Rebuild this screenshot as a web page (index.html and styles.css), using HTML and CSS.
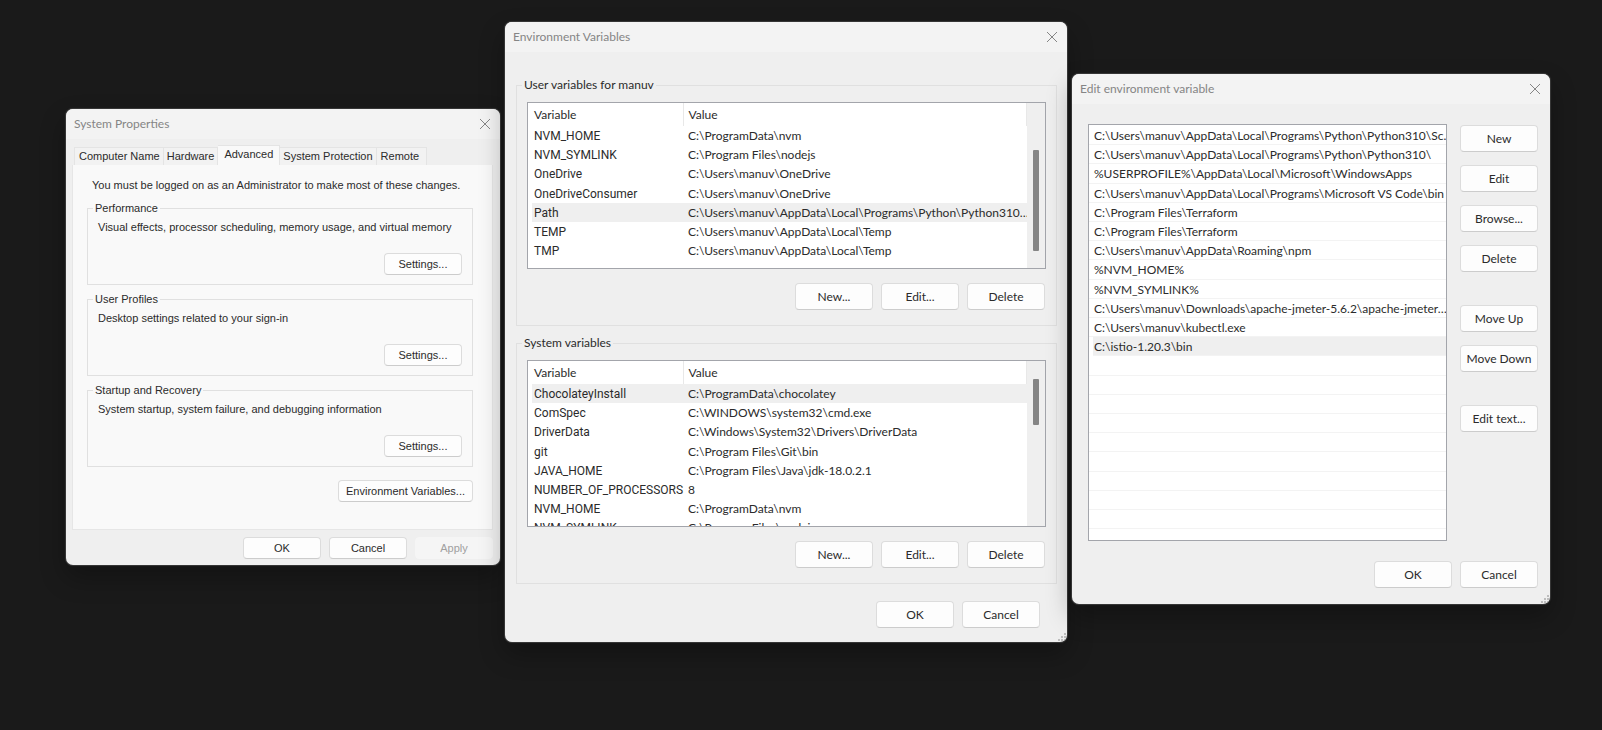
FILE: index.html
```html
<!DOCTYPE html>
<html lang="en">
<head>
<meta charset="utf-8">
<title>Environment Variables</title>
<link rel="stylesheet" href="styles.css">
</head>
<body>
<main class="desktop">

  <section class="window system-properties" aria-label="System Properties">
    <header class="titlebar">
      <h1 class="title">System Properties</h1>
      <button class="close" type="button" aria-label="Close"><svg viewBox="0 0 12 12" width="12" height="12"><path d="M1 1L11 11M11 1L1 11"/></svg></button>
    </header>
    <nav class="tabs">
      <button class="tab" type="button">Computer Name</button>
      <button class="tab" type="button">Hardware</button>
      <button class="tab active" type="button">Advanced</button>
      <button class="tab" type="button">System Protection</button>
      <button class="tab" type="button">Remote</button>
    </nav>
    <div class="panel">
      <p class="notice">You must be logged on as an Administrator to make most of these changes.</p>
      <fieldset class="group setting">
        <legend>Performance</legend>
        <p>Visual effects, processor scheduling, memory usage, and virtual memory</p>
        <button class="btn" type="button">Settings...</button>
      </fieldset>
      <fieldset class="group setting">
        <legend>User Profiles</legend>
        <p>Desktop settings related to your sign-in</p>
        <button class="btn" type="button">Settings...</button>
      </fieldset>
      <fieldset class="group setting">
        <legend>Startup and Recovery</legend>
        <p>System startup, system failure, and debugging information</p>
        <button class="btn" type="button">Settings...</button>
      </fieldset>
      <button class="btn env-btn" type="button">Environment Variables...</button>
    </div>
    <footer class="actions">
      <button class="btn" type="button">OK</button>
      <button class="btn" type="button">Cancel</button>
      <button class="btn" type="button" disabled>Apply</button>
    </footer>
  </section>

  <section class="window environment" aria-label="Environment Variables">
    <header class="titlebar">
      <h1 class="title">Environment Variables</h1>
      <button class="close" type="button" aria-label="Close"><svg viewBox="0 0 12 12" width="12" height="12"><path d="M1 1L11 11M11 1L1 11"/></svg></button>
    </header>
    <div class="groups">
      <fieldset class="group variables">
        <legend>User variables for manuv</legend>
        <div class="listview">
          <table class="table">
            <thead><tr><th scope="col">Variable</th><th scope="col">Value</th></tr></thead>
            <tbody>
              <tr><td>NVM_HOME</td><td>C:\ProgramData\nvm</td></tr>
              <tr><td>NVM_SYMLINK</td><td>C:\Program Files\nodejs</td></tr>
              <tr><td>OneDrive</td><td>C:\Users\manuv\OneDrive</td></tr>
              <tr><td>OneDriveConsumer</td><td>C:\Users\manuv\OneDrive</td></tr>
              <tr class="selected"><td>Path</td><td>C:\Users\manuv\AppData\Local\Programs\Python\Python310…</td></tr>
              <tr><td>TEMP</td><td>C:\Users\manuv\AppData\Local\Temp</td></tr>
              <tr><td>TMP</td><td>C:\Users\manuv\AppData\Local\Temp</td></tr>
            </tbody>
          </table>
          <div class="scrollbar"><div class="thumb thumb-end"></div></div>
        </div>
        <div class="actions">
          <button class="btn" type="button">New...</button>
          <button class="btn" type="button">Edit...</button>
          <button class="btn" type="button">Delete</button>
        </div>
      </fieldset>
      <fieldset class="group variables">
        <legend>System variables</legend>
        <div class="listview">
          <table class="table">
            <thead><tr><th scope="col">Variable</th><th scope="col">Value</th></tr></thead>
            <tbody>
              <tr class="selected"><td>ChocolateyInstall</td><td>C:\ProgramData\chocolatey</td></tr>
              <tr><td>ComSpec</td><td>C:\WINDOWS\system32\cmd.exe</td></tr>
              <tr><td>DriverData</td><td>C:\Windows\System32\Drivers\DriverData</td></tr>
              <tr><td>git</td><td>C:\Program Files\Git\bin</td></tr>
              <tr><td>JAVA_HOME</td><td>C:\Program Files\Java\jdk-18.0.2.1</td></tr>
              <tr><td>NUMBER_OF_PROCESSORS</td><td>8</td></tr>
              <tr><td>NVM_HOME</td><td>C:\ProgramData\nvm</td></tr>
              <tr><td>NVM_SYMLINK</td><td>C:\Program Files\nodejs</td></tr>
            </tbody>
          </table>
          <div class="scrollbar"><div class="thumb thumb-start"></div></div>
        </div>
        <div class="actions">
          <button class="btn" type="button">New...</button>
          <button class="btn" type="button">Edit...</button>
          <button class="btn" type="button">Delete</button>
        </div>
      </fieldset>
    </div>
    <footer class="actions">
      <button class="btn" type="button">OK</button>
      <button class="btn" type="button">Cancel</button>
    </footer>
    <svg class="grip" viewBox="0 0 10 10" width="10" height="10"><path d="M7 1h2v2h-2zM4 4h2v2h-2zM7 4h2v2h-2zM1 7h2v2h-2zM4 7h2v2h-2zM7 7h2v2h-2z"/></svg>
  </section>

  <section class="window edit-variable" aria-label="Edit environment variable">
    <header class="titlebar">
      <h1 class="title">Edit environment variable</h1>
      <button class="close" type="button" aria-label="Close"><svg viewBox="0 0 12 12" width="12" height="12"><path d="M1 1L11 11M11 1L1 11"/></svg></button>
    </header>
    <div class="editor">
      <ul class="paths">
        <li>C:\Users\manuv\AppData\Local\Programs\Python\Python310\Sc…</li>
        <li>C:\Users\manuv\AppData\Local\Programs\Python\Python310\</li>
        <li>%USERPROFILE%\AppData\Local\Microsoft\WindowsApps</li>
        <li>C:\Users\manuv\AppData\Local\Programs\Microsoft VS Code\bin</li>
        <li>C:\Program Files\Terraform</li>
        <li>C:\Program Files\Terraform</li>
        <li>C:\Users\manuv\AppData\Roaming\npm</li>
        <li>%NVM_HOME%</li>
        <li>%NVM_SYMLINK%</li>
        <li>C:\Users\manuv\Downloads\apache-jmeter-5.6.2\apache-jmeter…</li>
        <li>C:\Users\manuv\kubectl.exe</li>
        <li class="selected">C:\istio-1.20.3\bin</li>
        <li></li><li></li><li></li><li></li><li></li><li></li><li></li><li></li><li></li>
      </ul>
      <div class="side">
        <button class="btn" type="button">New</button>
        <button class="btn" type="button">Edit</button>
        <button class="btn" type="button">Browse...</button>
        <button class="btn" type="button">Delete</button>
        <button class="btn section-start" type="button">Move Up</button>
        <button class="btn" type="button">Move Down</button>
        <button class="btn section-start" type="button">Edit text...</button>
      </div>
    </div>
    <footer class="actions">
      <button class="btn" type="button">OK</button>
      <button class="btn" type="button">Cancel</button>
    </footer>
    <svg class="grip" viewBox="0 0 10 10" width="10" height="10"><path d="M7 1h2v2h-2zM4 4h2v2h-2zM7 4h2v2h-2zM1 7h2v2h-2zM4 7h2v2h-2zM7 7h2v2h-2z"/></svg>
  </section>

</main>
</body>
</html>
```

FILE: styles.css
```css
* {
  box-sizing: border-box;
}

body {
  margin: 0;
  min-height: 100vh;
  background: #1a1a1a;
  color: #2b2b2b;
  font: 12px/16px Lato, "Noto Sans", sans-serif;
}

.desktop {
  display: flex;
  align-items: flex-start;
  gap: 5px;
  padding: 22px 52px 22px 66px;
}

/* Windows */
.window {
  position: relative;
  min-width: 0;
  border-radius: 7px;
  background: #efefef;
  box-shadow: 0 0 1px 1px #3a3a3a, 0 12px 26px rgba(0, 0, 0, 0.3);
  overflow: clip;
}

.system-properties {
  flex: 434 1 0;
  margin-top: 87px;
  font: 11px/14px "Liberation Sans", Arial, sans-serif;
}

.environment {
  flex: 562 1 0;
}

.edit-variable {
  flex: 478 1 0;
  margin-top: 52px;
}

.titlebar {
  display: flex;
  align-items: center;
  justify-content: space-between;
  height: 30px;
  padding: 0 9px 0 8px;
  background: #f3f3f3;
}

.title {
  margin: 0;
  color: #858585;
  font: 12px/16px Lato, "Noto Sans", sans-serif;
}

.close {
  display: flex;
  padding: 0;
  border: 0;
  background: none;
}

.close svg {
  fill: none;
  stroke: #858585;
}

.grip {
  position: absolute;
  right: 0;
  bottom: 0;
  fill: #bdbdbd;
}

/* Shared controls */
.btn {
  width: 78px;
  height: 27px;
  padding: 0;
  border: 1px solid #dcdcdc;
  border-bottom-color: #cccccc;
  border-radius: 4px;
  background: #fdfdfd;
  color: inherit;
  font: inherit;
  white-space: nowrap;
}

.btn:disabled {
  border-color: #f5f5f5;
  background: #f5f5f5;
  color: #a0a0a0;
}

.actions {
  display: flex;
  justify-content: flex-end;
  gap: 8px;
}

.group {
  min-width: 0;
  margin: 0;
  border: 1px solid #e0e0e0;
}

.group legend {
  padding: 0 2px;
}

/* System Properties */
.system-properties .btn {
  height: 22px;
}

.tabs {
  display: flex;
  align-items: flex-end;
  height: 26px;
  padding: 0 8px;
}

.tab {
  height: 18px;
  padding: 0 3px 1px;
  border: 1px solid #e4e4e4;
  border-width: 1px 1px 0 0;
  background: #f2f2f2;
  color: inherit;
  font: inherit;
  white-space: nowrap;
}

.tab:first-child {
  padding-left: 4px;
  border-left-width: 1px;
}

.tab:last-child {
  padding: 0 7px 1px 4px;
}

.tab.active {
  height: 20px;
  padding: 0 6px 3px;
  background: #f9f9f9;
}

.panel {
  display: flex;
  flex-direction: column;
  height: 365px;
  margin: 0 7px 0 6px;
  padding: 13px 19px 27px 14px;
  border: 1px solid #e6e6e6;
  border-top: 0;
  background: #f9f9f9;
}

.notice {
  margin: 0 0 9px 5px;
}

.setting {
  display: flex;
  flex-direction: column;
  height: 84px;
  margin-bottom: 7px;
  padding: 5px 10px 0;
}

.setting legend {
  margin-left: -5px;
}

.setting p {
  margin: 0 0 19px;
}

.setting .btn {
  align-self: flex-end;
}

.system-properties .env-btn {
  width: 135px;
  margin-top: auto;
  align-self: flex-end;
}

.system-properties .actions {
  padding: 7px 7px 6px;
}

/* Environment Variables */
.groups {
  display: flex;
  flex-direction: column;
  gap: 9px;
  padding: 25px 10px 0 11px;
}

.variables {
  padding: 9px 10px 15px;
}

.variables legend {
  margin-left: -5px;
}

.variables .actions {
  padding-right: 1px;
}

.listview {
  display: flex;
  height: 167px;
  margin-bottom: 14px;
  border: 1px solid #a3a5ab;
  background: #ffffff;
  overflow: hidden;
}

.table {
  flex: 1;
  width: 100%;
  min-width: 0;
  height: max-content;
  margin-left: 4px;
  border-collapse: collapse;
  table-layout: fixed;
}

.table th,
.table td {
  height: 19px;
  padding: 0 0 0 5px;
  font-weight: 400;
  text-align: left;
  white-space: nowrap;
}

.table th {
  height: 23px;
  border-right: 1px solid #e8e8e8;
}

.table th:first-child,
.table td:first-child {
  width: 151px;
  padding-left: 2px;
}

.table td:first-child {
  font-family: Roboto, "Noto Sans", sans-serif;
}

.table tbody tr:nth-child(5n + 3) td {
  height: 20px;
}

.table .selected {
  background: #efefef;
}

.scrollbar {
  flex: none;
  width: 18px;
  padding: 0 6px;
  background: #efefef;
}

.thumb {
  border-radius: 1px;
  background: #858585;
}

.thumb-end {
  height: 101px;
  margin-top: 47px;
}

.thumb-start {
  height: 46px;
  margin-top: 18px;
}

.environment > .actions {
  padding: 17px 27px 14px;
}

/* Edit environment variable */
.editor {
  display: flex;
  gap: 13px;
  padding: 20px 12px 0 16px;
}

.paths {
  flex: 1;
  min-width: 0;
  height: 417px;
  margin: 0;
  padding: 1px 0 0;
  border: 1px solid #a3a5ab;
  background: #ffffff;
  list-style: none;
  overflow: hidden;
}

.paths li {
  height: 19px;
  padding: 2px 0 0 5px;
  border-bottom: 1px solid #f3f3f3;
  white-space: nowrap;
}

.paths li:nth-child(5n + 3) {
  height: 20px;
}

.paths .selected {
  margin-left: 4px;
  padding-left: 1px;
  background: #efefef;
}

.side {
  display: flex;
  flex-direction: column;
  gap: 13px;
  padding-top: 1px;
}

.side .section-start {
  margin-top: 20px;
}

.edit-variable > .actions {
  padding: 20px 12px 16px;
}
```
